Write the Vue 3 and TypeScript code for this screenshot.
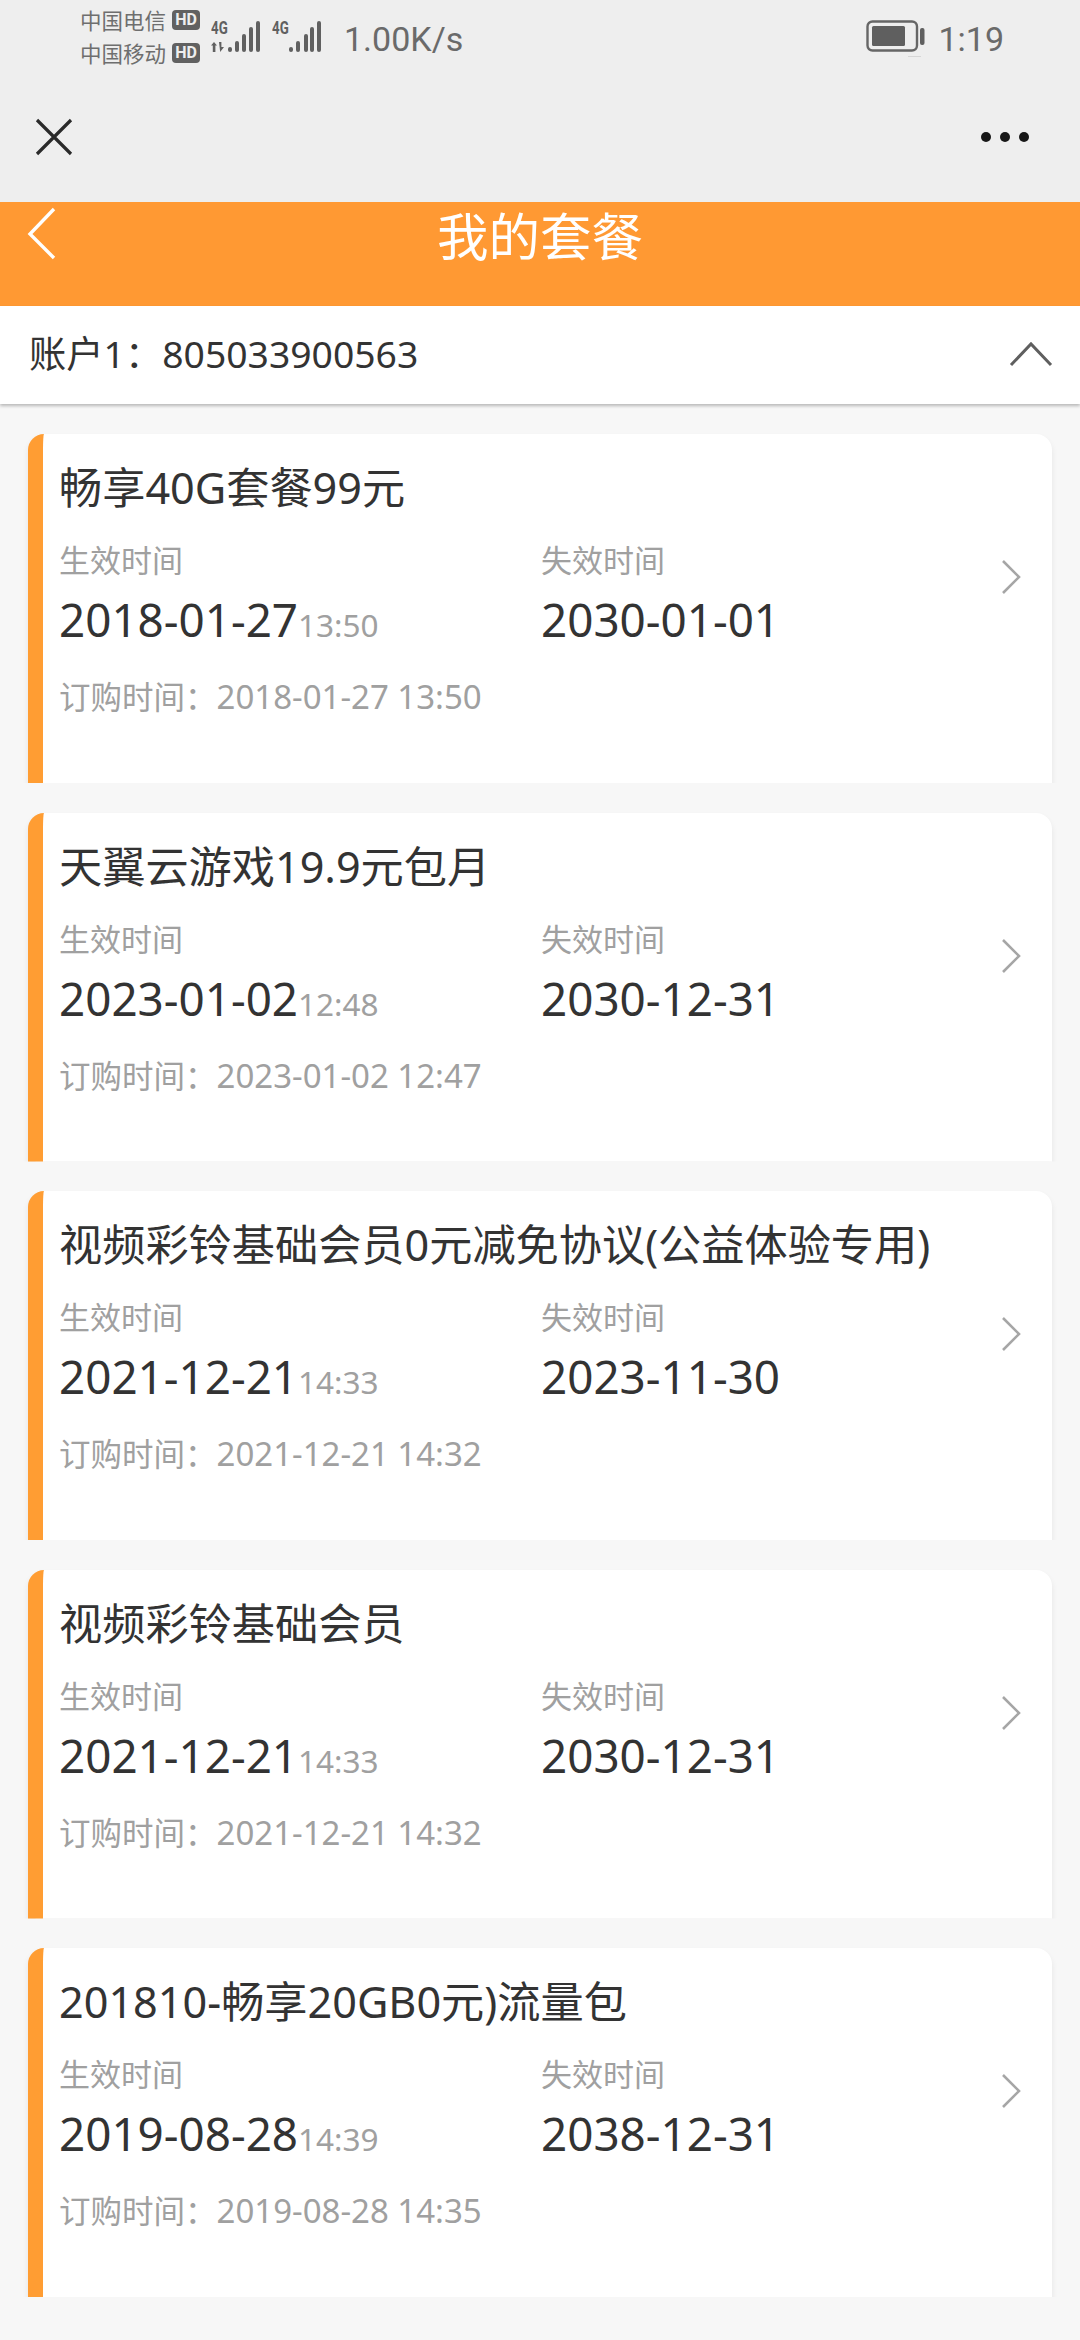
<script setup lang="ts">
interface Plan {
  name: string
  startDate: string
  startTime: string
  endDate: string
  ordered: string
}

const plans: Plan[] = [
  { name: '畅享40G套餐99元', startDate: '2018-01-27', startTime: '13:50', endDate: '2030-01-01', ordered: '2018-01-27 13:50' },
  { name: '天翼云游戏19.9元包月', startDate: '2023-01-02', startTime: '12:48', endDate: '2030-12-31', ordered: '2023-01-02 12:47' },
  { name: '视频彩铃基础会员0元减免协议(公益体验专用)', startDate: '2021-12-21', startTime: '14:33', endDate: '2023-11-30', ordered: '2021-12-21 14:32' },
  { name: '视频彩铃基础会员', startDate: '2021-12-21', startTime: '14:33', endDate: '2030-12-31', ordered: '2021-12-21 14:32' },
  { name: '201810-畅享20GB0元)流量包', startDate: '2019-08-28', startTime: '14:39', endDate: '2038-12-31', ordered: '2019-08-28 14:35' }
]
</script>

<template>
  <div class="page">
    <div class="chrome">
      <div class="status">
        <div class="carriers">
          <div class="carrier"><span>中国电信</span><b class="hd">HD</b></div>
          <div class="carrier"><span>中国移动</span><b class="hd">HD</b></div>
        </div>
        <div class="signal first">
          <div class="net">
            <span class="g">4G</span>
            <svg class="updown" width="17" height="10" viewBox="0 0 17 10"><path d="M3 0 L6 3.5 H4.4 V10 H1.8 V3.5 H0 Z M8 0 H10.4 V5 H13 L9.2 10 Z" /></svg>
          </div>
          <svg width="32" height="31" viewBox="0 0 32 31"><rect x="0" y="26" width="4" height="5" rx="2"/><rect x="7" y="20" width="4" height="11" rx="2"/><rect x="14" y="13" width="4" height="18" rx="2"/><rect x="21" y="6" width="4" height="25" rx="2"/><rect x="28" y="0" width="4" height="31" rx="2"/></svg>
        </div>
        <div class="signal second">
          <div class="net"><span class="g">4G</span></div>
          <svg width="32" height="31" viewBox="0 0 32 31"><rect x="0" y="26" width="4" height="5" rx="2"/><rect x="7" y="20" width="4" height="11" rx="2"/><rect x="15" y="13" width="4" height="18" rx="2"/><rect x="21" y="6" width="4" height="25" rx="2"/><rect x="28" y="0" width="4" height="31" rx="2"/></svg>
        </div>
        <span class="speed">1.00K/s</span>
        <span class="spacer"></span>
        <svg class="battery" width="59" height="38" viewBox="0 0 59 38">
          <rect x="1.5" y="1.5" width="49.5" height="29" rx="5" fill="none" stroke="#666" stroke-width="2.4"/>
          <rect x="6" y="6" width="33" height="20" rx="1.5" fill="#5f5f5f"/>
          <rect x="54" y="8" width="4.5" height="17" rx="2" fill="#5f5f5f"/>
          <rect x="42" y="36" width="13" height="1" fill="#d6d6d6"/>
        </svg>
        <span class="clock">1:19</span>
      </div>
      <div class="webbar">
        <svg width="38" height="38" viewBox="0 0 38 38"><path d="M2 2 L36 36 M36 2 L2 36" stroke="#2a2a2a" stroke-width="3.2" fill="none"/></svg>
        <div class="dots"><i></i><i></i><i></i></div>
      </div>
    </div>

    <header class="head">
      <svg class="back" width="30" height="54" viewBox="0 0 30 54"><path d="M27 2 L3 27 L27 51" stroke="#fff" stroke-width="3.4" fill="none"/></svg>
      <h1>我的套餐</h1>
    </header>

    <div class="account">
      <span>账户1：805033900563</span>
      <svg width="44" height="26" viewBox="0 0 44 26"><path d="M2 24 L22 3 L42 24" stroke="#5f5f5f" stroke-width="3" fill="none"/></svg>
    </div>

    <main class="list">
      <article v-for="p in plans" :key="p.name" class="card">
        <div class="title">{{ p.name }}</div>
        <div class="dates">
          <div class="col">
            <div class="label">生效时间</div>
            <div class="value">{{ p.startDate }}<small>{{ p.startTime }}</small></div>
          </div>
          <div class="col">
            <div class="label">失效时间</div>
            <div class="value">{{ p.endDate }}</div>
          </div>
          <svg class="chev" width="22" height="36" viewBox="0 0 22 36"><path d="M3 2 L19 18 L3 34" stroke="#a6a6a6" stroke-width="2.6" fill="none"/></svg>
        </div>
        <div class="order">订购时间：<span class="stamp">{{ p.ordered }}</span></div>
      </article>
    </main>
  </div>
</template>

<style>
html, body { margin: 0; background: #f7f7f7; }
</style>

<style scoped>
.page {
  width: 1080px;
  height: 2340px;
  overflow: hidden;
  background: #f7f7f7;
  font-family: "Noto Sans", "Noto Sans CJK SC", sans-serif;
  color: #333;
}
.chrome { height: 202px; background: #eeeeee; }
.status {
  height: 72px;
  display: flex;
  align-items: flex-start;
  padding-left: 80px;
  padding-right: 76px;
  color: #666;
  font-family: Roboto, "Noto Sans CJK SC", sans-serif;
}
.carriers { padding-top: 3px; }
.carrier {
  display: flex;
  align-items: center;
  gap: 6px;
  height: 33px;
  font-size: 21.5px;
  color: #6e6e6e;
}
.hd {
  width: 28px;
  height: 20px;
  border-radius: 4px;
  background: #616161;
  color: #eee;
  font-size: 16px;
  line-height: 20px;
  text-align: center;
  font-weight: 700;
}
.signal { display: flex; align-items: flex-end; height: 31px; margin-top: 21px; fill: #606060; }
.signal svg { display: block; }
.first { margin-left: 11px; }
.second { margin-left: 12px; }
.net { width: 17px; height: 31px; position: relative; }
.g {
  display: block;
  font-size: 19px;
  line-height: 14px;
  font-weight: 700;
  color: #606060;
  transform: scaleX(.7);
  transform-origin: left top;
  white-space: nowrap;
}
.updown { position: absolute; left: 0; bottom: 0; }
.speed { margin-left: 23px; margin-top: 19px; font-size: 34px; line-height: 40px; color: #6a6a6a; }
.spacer { flex: 1; }
.battery { margin-top: 20px; }
.clock { margin-left: 13px; margin-top: 19px; font-size: 34px; line-height: 40px; color: #6a6a6a; }
.webbar {
  height: 130px;
  display: flex;
  align-items: center;
  justify-content: space-between;
  padding: 0 51px 0 35px;
  box-sizing: border-box;
}
.dots { display: flex; gap: 9px; }
.dots i { width: 10px; height: 10px; border-radius: 50%; background: #171717; }
.head {
  position: relative;
  height: 104px;
  background: #ff9933;
}
.head h1 {
  margin: 0;
  padding-top: 2px;
  text-align: center;
  font-size: 51.5px;
  line-height: 64px;
  font-weight: 400;
  color: #fff;
}
.back { position: absolute; left: 27px; top: 5px; }
.account {
  height: 98px;
  background: #fff;
  display: flex;
  align-items: center;
  justify-content: space-between;
  padding: 0 27px 0 29px;
  font-size: 37.3px;
  color: #333;
  box-shadow: 0 2px 3px rgba(0,0,0,.25);
  position: relative;
}
.account span { margin-top: -6px; }
.account svg { margin-top: -2px; }
.list {
  display: flex;
  flex-direction: column;
  gap: 29.5px;
  padding: 30px 28px 0;
}
.card {
  height: 349px;
  box-sizing: border-box;
  background: #fff;
  border-left: 15px solid #ff9d33;
  border-radius: 16px 16px 0 0;
  padding: 26px 0 0 16px;
  box-shadow: 0 4px 6px rgba(0,0,0,.08);
  clip-path: inset(-8px -8px 0 -8px);
}
.title { font-size: 43.2px; line-height: 56px; color: #333; white-space: nowrap; }
.dates { position: relative; display: flex; margin-top: 24px; }
.col { width: 482px; }
.label { font-size: 31px; line-height: 40px; color: #a0a0a0; }
.value { margin-top: 12px; font-size: 45.8px; line-height: 54px; color: #333; white-space: nowrap; }
.value small { font-size: 31.5px; color: #a0a0a0; }
.chev { position: absolute; left: 941px; top: 19px; }
.order { margin-top: 25px; font-size: 31.5px; line-height: 40px; color: #a0a0a0; }
.stamp { font-size: 33px; }
</style>
